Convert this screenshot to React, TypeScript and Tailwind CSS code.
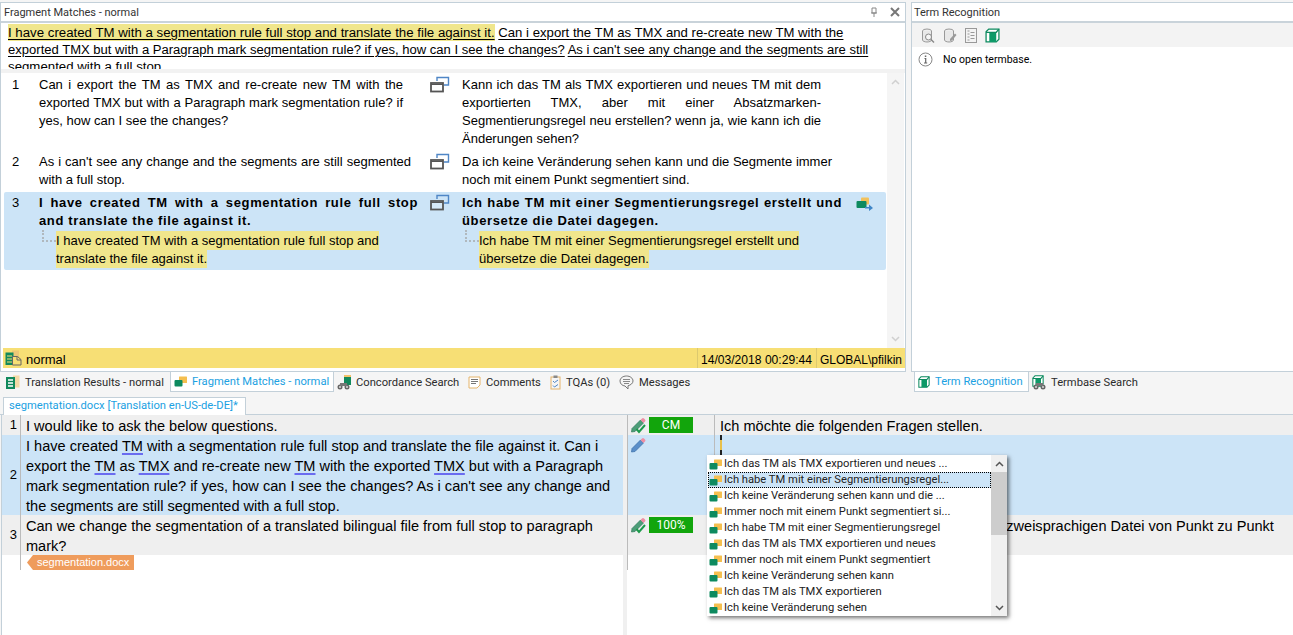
import React from 'react';

const uiFont = "font-['Roboto','Noto_Sans',sans-serif]";
const textFont = "font-['Liberation_Sans',Arial,sans-serif]";

function LinkIcon() {
    return (
        <svg width="20" height="17" viewBox="0 0 20 17" fill="none" className="shrink-0">
            <path d="M7 5V1.500H18.500V9H14" stroke="#4f86c6" strokeWidth="1.400" />
            <rect x="1" y="7" width="12" height="8.500" stroke="#555" strokeWidth="1.800" fill="#fff" fillOpacity="0.2" />
            <path d="M1 8.500H13" stroke="#555" strokeWidth="1" />
        </svg>
    );
}

function FragmentIcon() {
    return (
        <svg width="13" height="11" viewBox="0 0 13 11" className="shrink-0">
            <rect x="5" y="0.500" width="8" height="6.500" rx="0.500" fill="#f5bf4f" />
            <rect x="0.500" y="4" width="8" height="6.500" rx="1" fill="#0d8a5f" />
        </svg>
    );
}

function PencilIcon({ check }: { check?: boolean }) {
    const body = check ? '#4d9d78' : '#5b8fc9';
    return (
        <svg width="17" height="17" viewBox="0 0 17 17" className="shrink-0">
            <path d="M2 11.500 10.500 3l3 3L5 14.500l-3.500.5z" fill={body} stroke={check ? '#2f7d5a' : '#3b6ea8'} strokeWidth="0.700" />
            <path d="M10.500 3 12 1.500a1.400 1.400 0 0 1 2 0l1 1a1.400 1.400 0 0 1 0 2L13.500 6z" fill="#ee8fa4" />
            {check && <path d="M6.500 12 9 15l6-7" fill="none" stroke="#1d9a4b" strokeWidth="2" />}
        </svg>
    );
}

function TermIcon({ size = 15 }: { size?: number }) {
    return (
        <svg width={size} height={size} viewBox="0 0 14 14" className="shrink-0">
            <path d="M1 3.500 3.500 1H13v9.500L10.500 13H1z" fill="#fff" stroke="#0d8a5f" strokeWidth="1.200" />
            <path d="M4 4h6.500v9H4z" fill="#0d9a68" />
            <path d="M1 4h9.500L13 1" fill="none" stroke="#0d8a5f" strokeWidth="1.200" />
        </svg>
    );
}

function ResultsIcon() {
    return (
        <svg width="15" height="14" viewBox="0 0 15 14" className="shrink-0">
            <rect x="8" y="0.500" width="6.500" height="12" fill="#f3d9a6" />
            <rect x="1" y="2" width="9" height="12" fill="#11895c" />
            <path d="M3 5h5M3 8h5M3 11h5" stroke="#fff" strokeWidth="1.400" />
        </svg>
    );
}

function StatusIcon() {
    return (
        <svg width="17" height="16" viewBox="0 0 17 16" fill="none" className="shrink-0">
            <rect x="7" y="0.500" width="7" height="8" fill="#ecc777" />
            <rect x="0.500" y="2.500" width="8" height="12.500" fill="#11895c" />
            <path d="M2 6h5M2 9h5M2 12h5" stroke="#f7df75" strokeWidth="1.200" />
            <path d="M7.500 6.500h5l3.500 3v5.500H7.500z" fill="#f7df75" stroke="#666" />
            <path d="M12 6.500v3.500h4" stroke="#666" />
        </svg>
    );
}

function Binoculars() {
    return (
        <svg width="13" height="8" viewBox="0 0 13 8" className="absolute bottom-0 left-0">
            <circle cx="3" cy="5" r="2.500" fill="#666" />
            <circle cx="10" cy="5" r="2.500" fill="#666" />
            <path d="M3 1h7v3H3z" fill="#777" />
            <circle cx="3" cy="5" r="1" fill="#ddd" />
            <circle cx="10" cy="5" r="1" fill="#ddd" />
        </svg>
    );
}

function ConcordanceIcon() {
    return (
        <span className="relative block w-[14px] h-[15px] shrink-0">
            <span className="absolute right-0 top-0 w-[7px] h-[10px] bg-[#11895c] border-t-2 border-[#f3c26a]" />
            <Binoculars />
        </span>
    );
}

function TermSearchIcon() {
    return (
        <span className="relative block w-[14px] h-[15px] shrink-0">
            <span className="absolute left-0 top-0"><TermIcon size={12} /></span>
            <span className="absolute left-[1px] bottom-0 block w-[13px] h-[8px]"><Binoculars /></span>
        </span>
    );
}

function CommentsIcon() {
    return (
        <svg width="13" height="13" viewBox="0 0 13 13" fill="none" className="shrink-0">
            <path d="M1 1h11v8l-3 3H1z" stroke="#e5b46b" fill="#fff" />
            <path d="M3 3.500h7M3 5.500h7M3 7.500h5" stroke="#777" />
        </svg>
    );
}

function TqaIcon() {
    return (
        <svg width="11" height="15" viewBox="0 0 11 15" fill="none" className="shrink-0">
            <rect x="1" y="2" width="9" height="12" stroke="#e5b46b" />
            <rect x="3.500" y="0.500" width="4" height="2.500" fill="#888" />
            <path d="M3 6l1.500 1.500L8 5M3 10.500 4.500 12 8 9.500" stroke="#4f86c6" />
        </svg>
    );
}

function MessagesIcon() {
    return (
        <svg width="15" height="15" viewBox="0 0 15 15" fill="none" className="shrink-0">
            <path d="M7.500 1C3.800 1 1 3.200 1 6s2.400 4.800 5 5l3 3v-3.200c2.600-.7 5-2.400 5-4.800 0-2.800-2.800-5-6.500-5z" stroke="#777" />
            <path d="M4 4.500h7M4 6.500h7M5 8.500h5" stroke="#888" />
        </svg>
    );
}

function GreyDbIcon({ variant }: { variant: 'search' | 'edit' }) {
    return (
        <svg width="14" height="15" viewBox="0 0 14 15" fill="none" className="shrink-0">
            <ellipse cx="6" cy="3" rx="4.500" ry="2" stroke="#999" fill="#eee" />
            <path d="M1.500 3v9c0 1 2 2 4.500 2s4.500-1 4.500-2V3" stroke="#999" fill="#e8e8e8" />
            {variant === 'search' ? (
                <>
                    <circle cx="7.500" cy="9" r="3" stroke="#888" fill="#f5f5f5" />
                    <path d="m10 11.500 3 3" stroke="#888" strokeWidth="1.400" />
                </>
            ) : (
                <path d="M7 11 12 5.500l1.500 1.500L9 12.500l-2 .5z" fill="#999" />
            )}
        </svg>
    );
}

function TermListIcon() {
    return (
        <svg width="12" height="15" viewBox="0 0 12 15" fill="none" className="shrink-0">
            <rect x="0.500" y="0.500" width="11" height="14" stroke="#999" fill="#f3f3f3" />
            <path d="M2.500 3h2M2.500 6h2M2.500 9h2M2.500 12h2M5.500 4.500h4M5.500 7.500h4M5.500 10.500h4" stroke="#999" />
        </svg>
    );
}

function InfoIcon() {
    return (
        <svg width="15" height="15" viewBox="0 0 15 15" fill="none" className="shrink-0">
            <circle cx="7.500" cy="7.500" r="6.500" stroke="#888" />
            <path d="M6.500 6.500h1.200V11M6 11h3.200" stroke="#666" strokeWidth="1.200" />
            <rect x="6.800" y="3.500" width="1.500" height="1.500" fill="#666" />
        </svg>
    );
}

function Chevron({ down, color = '#d0d0d0' }: { down?: boolean; color?: string }) {
    return (
        <svg width="9" height="6" viewBox="0 0 9 6" fill="none">
            <path d={down ? 'M1 1l3.500 3.500L8 1' : 'M1 5l3.500-3.500L8 5'} stroke={color} strokeWidth="1.500" />
        </svg>
    );
}

function Tab({ label, icon, active, width }: { label: string; icon: React.ReactNode; active?: boolean; width: string }) {
    return (
        <div className={`flex items-center gap-[5px] h-[20px] pl-[3px] text-[11.200px] whitespace-nowrap ${width} ${active ? 'bg-white border border-t-0 border-[#c3d0d9] text-[#1ba1e2]' : 'text-[#2b2b2b]'}`}>
            {icon}
            <span className="pt-[2px]">{label}</span>
        </div>
    );
}

const fragmentItems = [
    'Ich das TM als TMX exportieren und neues ...',
    'Ich habe TM mit einer Segmentierungsregel...',
    'Ich keine Veränderung sehen kann und die ...',
    'Immer noch mit einem Punkt segmentiert si...',
    'Ich habe TM mit einer Segmentierungsregel',
    'Ich das TM als TMX exportieren und neues',
    'Immer noch mit einem Punkt segmentiert',
    'Ich keine Veränderung sehen kann',
    'Ich das TM als TMX exportieren',
    'Ich keine Veränderung sehen',
];

function Term({ children }: { children: string }) {
    return <span className="underline decoration-[#6a6cf0] decoration-2 underline-offset-[2px]">{children}</span>;
}

export default function App() {
    return (
        <div className={`relative w-[1293px] h-[635px] overflow-hidden bg-[#f5f5f5] text-black ${textFont}`}>
            {/* Top panels */}
            <div className="flex h-[393px] pt-[2px]">
                <div className="flex flex-col w-[906px] h-[370px] pb-[3px] bg-white border border-[#c3d0d9]">
                    <div className={`flex items-center justify-between h-[20px] shrink-0 pl-[3px] pr-[5px] border-b-2 border-[#c9d3da] text-[11px] text-[#333] ${uiFont}`}>
                        <span className="pt-[2px]">Fragment Matches - normal</span>
                        <div className="flex items-center gap-[12px] text-[#777]">
                            <svg width="8" height="11" viewBox="0 0 8 11" fill="none"><path d="M2 1h4v5H2zM1 6h6M4 6v4" stroke="#888" /></svg>
                            <svg width="10" height="10" viewBox="0 0 10 10" fill="none"><path d="m1 1 8 8M9 1 1 9" stroke="#777" strokeWidth="2" /></svg>
                        </div>
                    </div>

                    <div className="h-[50px] shrink-0 overflow-hidden pl-[7px] pt-[1px] border-b-4 border-[#f2f2f2] text-[13.250px] leading-[17px] whitespace-nowrap">
                        <div>
                            <span className="underline underline-offset-2 bg-[#f0e68c] py-[1px]">I have created TM with a segmentation rule full stop and translate the file against it.</span>{' '}
                            <span className="underline underline-offset-2 text-[13.170px]">Can i export the TM as TMX and re-create new TM with the</span>
                        </div>
                        <div className="text-[13.050px]">
                            <span className="underline underline-offset-2">exported TMX but with a Paragraph mark segmentation rule? if yes, how can I see the changes?</span>{' '}
                            <span className="underline underline-offset-2">As i can't see any change and the segments are still</span>
                        </div>
                        <div className="underline underline-offset-2">segmented with a full stop.</div>
                    </div>

                    <div className="flex flex-1 min-h-0">
                        <div className="flex-1 pl-[3px] pt-[3px] text-[13px] leading-[18px]">
                            <div className="flex h-[77px]">
                                <div className="w-[35px] pl-[8px]">1</div>
                                <div className="w-[364px] text-justify">Can i export the TM as TMX and re-create new TM with the exported TMX but with a Paragraph mark segmentation rule? if yes, how can I see the changes?</div>
                                <div className="w-[59px] pl-[27px]"><LinkIcon /></div>
                                <div className="w-[359px] text-justify">Kann ich das TM als TMX exportieren und neues TM mit dem exportierten TMX, aber mit einer Absatzmarken-Segmentierungsregel neu erstellen? wenn ja, wie kann ich die Änderungen sehen?</div>
                            </div>
                            <div className="flex h-[39px]">
                                <div className="w-[35px] pl-[8px]">2</div>
                                <div className="w-[372px] text-justify">As i can't see any change and the segments are still segmented with a full stop.</div>
                                <div className="w-[51px] pl-[19px]"><LinkIcon /></div>
                                <div className="w-[370px] text-justify">Da ich keine Veränderung sehen kann und die Segmente immer noch mit einem Punkt segmentiert sind.</div>
                            </div>
                            <div className="flex h-[78px] w-[882px] bg-[#cce4f7] rounded-[2px] pt-[2px]">
                                <div className="w-[35px] pl-[8px]">3</div>
                                <div className="w-[379px]">
                                    <div className="font-bold text-justify tracking-[0.630px]">I have created TM with a segmentation rule full stop and translate the file against it.</div>
                                    <Fragment text="I have created TM with a segmentation rule full stop and translate the file against it." width="w-[330px]" />
                                </div>
                                <div className="w-[44px] pl-[12px]"><LinkIcon /></div>
                                <div className="w-[380px]">
                                    <div className="font-bold text-justify tracking-[0.630px]">Ich habe TM mit einer Segmentierungsregel erstellt und übersetze die Datei dagegen.</div>
                                    <Fragment text="Ich habe TM mit einer Segmentierungsregel erstellt und übersetze die Datei dagegen." width="w-[330px]" />
                                </div>
                                <div className="pl-[14px] pt-[3px]">
                                    <svg width="17" height="14" viewBox="0 0 17 14">
                                        <rect x="5" y="0.500" width="8" height="7" rx="1" fill="#f2c15c" />
                                        <rect x="0.500" y="4" width="10" height="7" rx="1" fill="#0d8a5f" />
                                        <path d="M9 10h4V7.500L17 11l-4 3v-2.500H9z" fill="#3f86c7" />
                                    </svg>
                                </div>
                            </div>
                        </div>
                        <div className="flex flex-col items-center justify-between w-[17px] mr-[1px] bg-[#f5f5f5] py-[6px]">
                            <Chevron />
                            <Chevron down />
                        </div>
                    </div>

                    <div className="flex items-center h-[20px] shrink-0 ml-[2px] bg-[#f7df75] text-[13px]">
                        <div className="flex flex-1 items-center gap-[4px] pl-[2px]">
                            <StatusIcon />
                            <span className="pt-[4px]">normal</span>
                        </div>
                        <div className="flex items-center h-full w-[119px] pl-[3px] pt-[4px] border-l border-[#dcc96f] text-[12.100px] whitespace-nowrap">14/03/2018 00:29:44</div>
                        <div className="flex items-center h-full w-[89px] pl-[3px] pt-[4px] border-l border-[#dcc96f] text-[12px] whitespace-nowrap">GLOBAL\pfilkin</div>
                    </div>
                </div>

                <div className="flex flex-col w-[382px] ml-[5px] h-[370px] bg-white border-t border-l border-b border-[#c3d0d9]">
                    <div className={`flex items-center h-[20px] pl-[2px] border-b-2 border-[#c9d3da] text-[11px] text-[#333] ${uiFont}`}>
                        <span className="pt-[2px]">Term Recognition</span>
                    </div>
                    <div className="flex items-center gap-[8px] h-[24px] pl-[9px] bg-[#f3f3f3]">
                        <GreyDbIcon variant="search" />
                        <GreyDbIcon variant="edit" />
                        <TermListIcon />
                        <TermIcon />
                    </div>
                    <div className={`flex items-center gap-[10px] pl-[6px] pt-[5px] text-[10.500px] ${uiFont}`}>
                        <InfoIcon />
                        <span>No open termbase.</span>
                    </div>
                </div>
            </div>

            {/* Tab strips */}
            <div className={`absolute top-[372px] left-[2px] flex ${uiFont}`}>
                <Tab width="w-[168px]" label="Translation Results - normal" icon={<ResultsIcon />} />
                <Tab active width="w-[164px]" label="Fragment Matches - normal" icon={<FragmentIcon />} />
                <Tab width="w-[131px]" label="Concordance Search" icon={<ConcordanceIcon />} />
                <Tab width="w-[82px]" label="Comments" icon={<CommentsIcon />} />
                <Tab width="w-[69px]" label="TQAs (0)" icon={<TqaIcon />} />
                <Tab width="w-[80px]" label="Messages" icon={<MessagesIcon />} />
            </div>
            <div className={`absolute top-[372px] left-[914px] flex ${uiFont}`}>
                <Tab active width="w-[115px]" label="Term Recognition" icon={<TermIcon size={12} />} />
                <Tab width="w-[120px]" label="Termbase Search" icon={<TermSearchIcon />} />
            </div>

            {/* Editor */}
            <div className="flex flex-col h-[242px]">
                <div className="flex h-[22px] pt-[4px] pl-[3px] border-b border-[#c3d0d9]">
                    <div className={`w-[243px] h-[18px] pl-[5px] bg-white border border-b-0 border-[#c3d0d9] text-[11.200px] leading-[16px] text-[#1ba1e2] whitespace-nowrap ${uiFont}`}>segmentation.docx [Translation en-US-de-DE]*</div>
                </div>
                <div className="flex-1 bg-white ml-[1px] border-l border-[#c3d0d9] text-[14.550px] leading-[20px]">
                    <Row h="h-[20px]" bg="bg-[#efefef]" n="1" status={<><PencilIcon check /><Badge>CM</Badge></>} target="Ich möchte die folgenden Fragen stellen.">
                        I would like to ask the below questions.
                    </Row>
                    <Row h="h-[80px]" bg="bg-[#cce4f7]" n="2" status={<PencilIcon />} target={<span className="block w-[2px] h-[20px] -mt-[1px] bg-[#222]"><span className="block h-[10px] translate-y-[5px] bg-[#e8c04a]" /></span>}>
                        I have created <Term>TM</Term> with a segmentation rule full stop and translate the file against it. Can i export the <Term>TM</Term> as <Term>TMX</Term> and re-create new <Term>TM</Term> with the exported <Term>TMX</Term> but with a Paragraph mark segmentation rule? if yes, how can I see the changes? As i can't see any change and the segments are still segmented with a full stop.
                    </Row>
                    <Row h="h-[40px]" bg="bg-[#efefef]" n="3" status={<><PencilIcon check /><Badge>100%</Badge></>} target="Dürfte die Segmentierung einer übersetzten zweisprachigen Datei von Punkt zu Punkt ändern?">
                        Can we change the segmentation of a translated bilingual file from full stop to paragraph mark?
                    </Row>
                    <div className="flex h-[15px]">
                        <div className="w-[19px] border-r-1 border-[#bbb]" />
                        <div className="w-[602px] relative">
                            <div className="absolute left-[6px] top-0 flex items-center h-[15px] pl-[10px] pr-[5px] bg-[#ef9c5c] text-white text-[11px] leading-none [clip-path:polygon(6px_0,100%_0,100%_100%,6px_100%,0_50%)]">segmentation.docx</div>
                        </div>
                        <div className="w-[5px] bg-[#f0f0f0] border-r-1 border-[#bbb]" />
                    </div>
                    <div className="w-[4px] h-[65px] ml-[621px] bg-[#f0f0f0]" />
                </div>
            </div>

            {/* Autosuggest list */}
            <div className={`absolute left-[707px] top-[455px] flex w-[300px] h-[161px] bg-white shadow-[2px_2px_4px_rgba(0,0,0,0.55)] text-[11.200px] text-[#222] ${uiFont}`}>
                <div className="flex-1 pl-[1px] pt-[1px]">
                    {fragmentItems.map((item, i) => (
                        <div key={item} className={`flex items-center gap-[2px] h-[16px] pl-[1px] whitespace-nowrap ${i === 1 ? 'bg-[#cce4f7] outline-1 outline-dotted outline-black -outline-offset-1' : ''}`}>
                            <FragmentIcon />
                            <span className="leading-none">{item}</span>
                        </div>
                    ))}
                </div>
                <div className="flex flex-col items-center justify-between w-[16px] bg-[#f0f0f0]">
                    <div className="flex flex-col items-center w-full">
                        <div className="flex items-center justify-center h-[17px]"><Chevron color="#555" /></div>
                        <div className="w-full h-[63px] bg-[#cdcdcd]" />
                    </div>
                    <div className="flex items-center justify-center h-[17px]"><Chevron down color="#555" /></div>
                </div>
            </div>
        </div>
    );
}

function Fragment({ text, width }: { text: string; width: string }) {
    return (
        <div className="flex">
            <div className="w-[14px] h-[12px] ml-[3px] border-l-2 border-b-2 border-dotted border-[#b0b8be] shrink-0" />
            <div className={`${width} mt-[2px]`}>
                <span className="bg-[#f0e68c] py-[2px]">{text}</span>
            </div>
        </div>
    );
}

function Badge({ children }: { children: string }) {
    return <div className={`flex items-center justify-center w-[44px] h-[16px] bg-[#12a50c] text-white text-[12px] ${uiFont}`}>{children}</div>;
}

function Row({ h, bg, n, status, target, children }: { h: string; bg: string; n: string; status: React.ReactNode; target: React.ReactNode; children: React.ReactNode }) {
    return (
        <div className={`flex ${h}`}>
            <div className={`flex w-[621px] ${bg}`}>
                <div className="flex items-center justify-end w-[19px] pr-[3px] border-r-1 border-[#bbb] text-[13px]">{n}</div>
                <div className="flex-1 pl-[5px] pt-[1px] pr-[2px]">{children}</div>
            </div>
            <div className="w-[5px] bg-[#f0f0f0] border-r-1 border-[#bbb]" />
            <div className={`flex items-start gap-[2px] w-[87px] pl-[2px] pt-[2px] border-r-1 border-[#bbb] ${bg}`}>{status}</div>
            <div className={`flex-1 pl-[5px] pt-[1px] pr-[10px] ${bg}`}>{target}</div>
        </div>
    );
}
